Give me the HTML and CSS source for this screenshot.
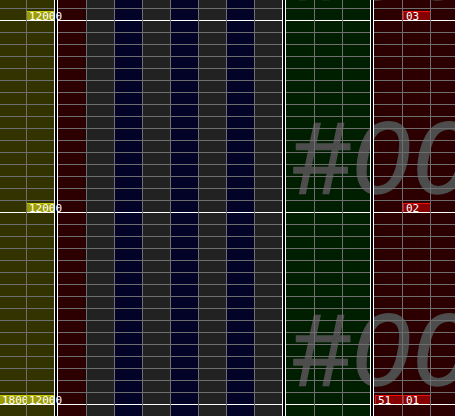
FILE: index.html
```html
<!DOCTYPE html>
<html lang="en">
<head>
  <meta charset="UTF-8">
  <title>Note editor</title>
  <link rel="stylesheet" href="styles.css">
</head>
<body>

  <div id="editor">
    <div class="col bpm first"></div>
    <div class="vline"></div>
    <div class="col bpm"></div>
    <div class="sep"></div>
    <div class="col red wide"></div>
    <div class="vline"></div>
    <div class="col dark"></div>
    <div class="vline"></div>
    <div class="col navy"></div>
    <div class="vline"></div>
    <div class="col dark"></div>
    <div class="vline"></div>
    <div class="col navy"></div>
    <div class="vline"></div>
    <div class="col dark"></div>
    <div class="vline"></div>
    <div class="col navy"></div>
    <div class="vline"></div>
    <div class="col dark"></div>
    <div class="sep"></div>
    <div class="col green wide"></div>
    <div class="vline"></div>
    <div class="col green"></div>
    <div class="vline"></div>
    <div class="col green"></div>
    <div class="sep"></div>
    <div class="col red wide"></div>
    <div class="vline"></div>
    <div class="col red"></div>
    <div class="vline"></div>
    <div class="col red last"></div>

    <!-- measure labels -->
    <div class="label m2">#002</div>
    <div class="label m1">#001</div>
    <div class="label m0">#000</div>

    <!-- notes -->
    <div class="note bpm-note lane-1 row-top">12000</div>
    <div class="note red-note lane-b row-top">03</div>
    <div class="note bpm-note lane-1 row-mid">12000</div>
    <div class="note red-note lane-b row-mid">02</div>
    <div class="note bpm-note lane-0 row-bot">18000</div>
    <div class="note bpm-note lane-1 row-bot">12000</div>
    <div class="note red-note lane-a row-bot">51</div>
    <div class="note red-note lane-b row-bot">01</div>
  </div>

</body>
</html>
```

FILE: styles.css
```css
body {
  margin: 0;
  background-color: #000;
  overflow: hidden;
}
#editor {
  position: relative;
  display: flex;
  width: 455px;
  height: 416px;
  overflow: hidden;
  background-color: #000;
}
.col {
  position: relative;
  width: 27px;
  flex-shrink: 0;
  height: 100%;
}
.col.first {
  width: 26px;
}
.col.wide {
  width: 28px;
}
.col.last {
  flex: 1;
}
/* grid lines sit above the measure labels */
.col::after {
  content: '';
  position: absolute;
  top: 0;
  left: 0;
  right: 0;
  bottom: 0;
  z-index: 2;
  background-image:
    repeating-linear-gradient(to bottom, transparent 0 20px, #fff 20px 21px, transparent 21px 192px),
    repeating-linear-gradient(to bottom, transparent 0 8px, #6e6e6e 8px 9px, transparent 9px 12px);
}
.bpm   { background-color: #333300; }
.red   { background-color: #2c0000; }
.dark  { background-color: #222222; }
.navy  { background-color: #030328; }
.green { background-color: #001f00; }

.vline {
  position: relative;
  z-index: 2;
  width: 1px;
  flex-shrink: 0;
  background-color: #6e6e6e;
}
.sep {
  position: relative;
  z-index: 2;
  width: 2px;
  flex-shrink: 0;
  border-left: 1px solid #fff;
  border-right: 1px solid #fff;
  background-color: #000;
}

.label {
  position: absolute;
  z-index: 1;
  left: 292px;
  font-family: "Liberation Sans", Arial, sans-serif;
  font-style: italic;
  font-size: 102px;
  line-height: 1;
  letter-spacing: 4px;
  color: #4d4d4d;
  -webkit-text-stroke: 1.5px #4d4d4d;
  white-space: nowrap;
}
.m2 { top: -87px; }
.m1 { top: 107px; }
.m0 { top: 299px; }

.note {
  position: absolute;
  z-index: 3;
  box-sizing: border-box;
  width: 27px;
  height: 9px;
  padding-left: 2px;
  font-family: "DejaVu Sans Mono", monospace;
  font-size: 11px;
  line-height: 9px;
  color: #fff;
  white-space: nowrap;
}
.bpm-note {
  background-color: #9c9c00;
  border-top: 1px solid #c8c800;
}
.red-note {
  background-color: #860000;
  border-top: 1px solid #f01010;
  border-left: 1px solid #f01010;
}
.lane-0 { left: 0; }
.lane-1 { left: 27px; }
.lane-a { left: 375px; }
.lane-b { left: 403px; }
.row-top { top: 11px; }
.row-mid { top: 203px; }
.row-bot { top: 395px; }
```
